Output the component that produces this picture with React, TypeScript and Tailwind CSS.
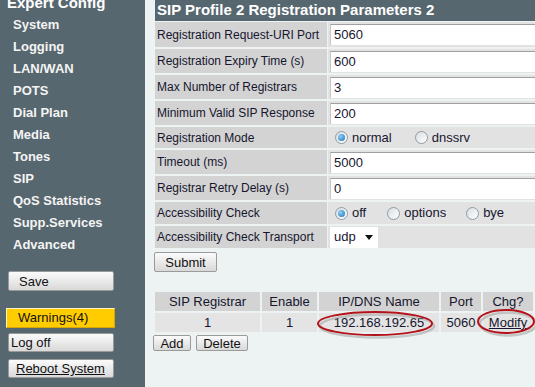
import React from "react";

const navItems = [
  "System",
  "Logging",
  "LAN/WAN",
  "POTS",
  "Dial Plan",
  "Media",
  "Tones",
  "SIP",
  "QoS Statistics",
  "Supp.Services",
  "Advanced",
];

const btn =
  "flex items-center border border-[#9a9a9a] rounded-[2px] bg-gradient-to-b from-[#fbfbfb] to-[#d9d9d9] text-[#111] leading-none";

const Radio: React.FC<{ checked?: boolean; label: string; className?: string }> = ({
  checked,
  label,
  className = "",
}) => (
  <span className={`flex items-center ${className}`}>
    <span className="w-[13px] h-[13px] rounded-full border border-[#8f9ba3] bg-gradient-to-br from-[#d9dde0] to-[#ffffff] flex items-center justify-center">
      {checked && (
        <span className="w-[7px] h-[7px] rounded-full bg-[radial-gradient(circle_at_35%_35%,#8fd0f5,#1572b8)]" />
      )}
    </span>
    <span className="ml-[4px]">{label}</span>
  </span>
);

const TextInput: React.FC<{ value: string }> = ({ value }) => (
  <div className="h-[21px] w-full bg-white border-t border-l border-t-[#a0a0a0] border-l-[#c8c8c8] flex items-center pl-[3px] text-[13px]">
    {value}
  </div>
);

type Row = { label: string; h: string; value: React.ReactNode };

const rows: Row[] = [
  { label: "Registration Request-URI Port", h: "h-[25px]", value: <TextInput value="5060" /> },
  { label: "Registration Expiry Time (s)", h: "h-[24px]", value: <TextInput value="600" /> },
  { label: "Max Number of Registrars", h: "h-[24px]", value: <TextInput value="3" /> },
  { label: "Minimum Valid SIP Response", h: "h-[24px]", value: <TextInput value="200" /> },
  {
    label: "Registration Mode",
    h: "h-[21px]",
    value: (
      <div className="flex items-center text-[13px] pl-[5px]">
        <Radio checked label="normal" />
        <Radio label="dnssrv" className="ml-[23px]" />
      </div>
    ),
  },
  { label: "Timeout (ms)", h: "h-[24px]", value: <TextInput value="5000" /> },
  { label: "Registrar Retry Delay (s)", h: "h-[24px]", value: <TextInput value="0" /> },
  {
    label: "Accessibility Check",
    h: "h-[22px]",
    value: (
      <div className="flex items-center text-[13px] pl-[5px]">
        <Radio checked label="off" />
        <Radio label="options" className="ml-[21px]" />
        <Radio label="bye" className="ml-[20px]" />
      </div>
    ),
  },
  {
    label: "Accessibility Check Transport",
    h: "h-[22px]",
    value: (
      <div className="h-[21px] w-[48px] bg-white flex items-center pl-[4px] text-[13px]">
        udp
        <svg className="ml-[9px]" width="8" height="5" viewBox="0 0 8 5">
          <path d="M0 0h8L4 5z" fill="#111" />
        </svg>
      </div>
    ),
  },
];

export default function App() {
  return (
    <div className="flex h-[387px] w-[535px] overflow-hidden bg-[#edf3f2] text-[#16162e] font-['Liberation_Sans',Arial,sans-serif]">
      <aside className="w-[145px] shrink-0 bg-[#57676f] flex flex-col">
        <div className="-mt-[8px] h-[22px] flex items-center pl-[7px] text-[15px] font-bold text-white">
          Expert Config
        </div>
        {navItems.map((item) => (
          <div key={item} className="h-[22px] flex items-center pl-[13px] text-[13px] font-bold text-[#f4f4f4]">
            {item}
          </div>
        ))}
        <div className={`${btn} mt-[15px] ml-[8px] w-[106px] h-[20px] pl-[10px] text-[13px]`}>Save</div>
        <div className="mt-[17px] ml-[6px] w-[109px] h-[20px] flex items-center pl-[11px] bg-[#ffcc00] border border-t-[#fff3c0] border-l-[#fff3c0] border-r-[#d9a800] border-b-[#d9a800] text-[13px] text-[#111]">
          Warnings(4)
        </div>
        <div className={`${btn} mt-[5px] ml-[8px] w-[106px] h-[19px] pl-[2px] text-[13px]`}>Log off</div>
        <div className={`${btn} mt-[7px] ml-[8px] w-[106px] h-[19px] pl-[7px] text-[13px] underline`}>
          Reboot System
        </div>
      </aside>

      <main className="flex-1 pl-[10px] flex flex-col">
        <div className="h-[21px] bg-[#57676f] flex items-center pl-[2px] text-[15px] font-bold text-white">
          SIP Profile 2 Registration Parameters 2
        </div>

        <div className="mt-[1px] grid grid-cols-[172px_1fr] gap-x-[1px] gap-y-[2px]">
          {rows.map((r) => (
            <React.Fragment key={r.label}>
              <div className={`${r.h} bg-[#d3d3d3] flex items-center pl-[2px] text-[12px]`}>{r.label}</div>
              <div className={`${r.h} bg-[#e2e2e2] flex items-center pl-[2px]`}>{r.value}</div>
            </React.Fragment>
          ))}
        </div>

        <div className={`${btn} mt-[4px] -ml-[1px] w-[63px] h-[20px] justify-center text-[13px] border-[#7a7a7a]`}>
          Submit
        </div>

        <div className="relative mt-[20px]">
          <div className="grid grid-cols-[105px_55px_120px_40px_50px] gap-[2px] text-[13px] text-center">
            {["SIP Registrar", "Enable", "IP/DNS Name", "Port", "Chg?"].map((h) => (
              <div key={h} className="h-[19px] bg-[#d3d3d3] flex items-center justify-center">
                {h}
              </div>
            ))}
            {["1", "1", "192.168.192.65", "5060"].map((v, i) => (
              <div key={i} className="h-[19px] bg-[#e4e4e4] flex items-center justify-center">
                {v}
              </div>
            ))}
            <div className="h-[19px] bg-[#e4e4e4] flex items-center justify-center underline">Modify</div>
          </div>

          <svg className="absolute left-0 top-0 pointer-events-none" width="380" height="50" viewBox="155 292 380 50">
            <ellipse cx="377" cy="326" rx="57" ry="11.5" fill="none" stroke="#9a9a9a" strokeOpacity="0.5" strokeWidth="2.5" />
            <ellipse cx="375" cy="323.5" rx="57" ry="11.5" fill="none" stroke="#b3121a" strokeWidth="2" />
            <ellipse cx="508" cy="324" rx="28" ry="11.5" fill="none" stroke="#9a9a9a" strokeOpacity="0.5" strokeWidth="2.5" />
            <ellipse cx="506" cy="321.5" rx="28" ry="11.5" fill="none" stroke="#b3121a" strokeWidth="2" />
          </svg>

          <div className="mt-[3px] -ml-[2px] flex gap-[5px]">
            <div className={`${btn} w-[38px] h-[16px] justify-center text-[13px]`}>Add</div>
            <div className={`${btn} w-[52px] h-[16px] justify-center text-[13px]`}>Delete</div>
          </div>
        </div>
      </main>
    </div>
  );
}
